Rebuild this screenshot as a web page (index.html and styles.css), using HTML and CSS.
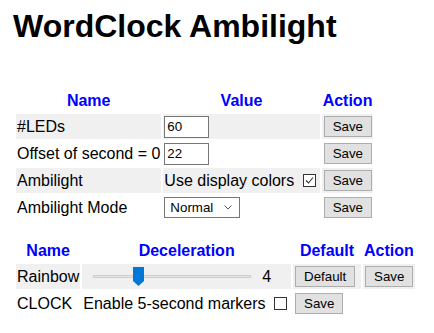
FILE: index.html
```html
<!DOCTYPE html>
<html>
<head>
<meta charset="utf-8">
<title>WordClock Ambilight</title>
<link rel="stylesheet" href="styles.css">
</head>
<body>
<h1 class="title">WordClock Ambilight</h1>

<table class="tbl tbl-config">
  <thead>
    <tr><th>Name</th><th>Value</th><th>Action</th></tr>
  </thead>
  <tbody>
    <tr class="alt">
      <td>#LEDs</td>
      <td><input class="num" type="text" value="60"></td>
      <td><button class="btn">Save</button></td>
    </tr>
    <tr>
      <td>Offset of second = 0</td>
      <td><input class="num" type="text" value="22"></td>
      <td><button class="btn">Save</button></td>
    </tr>
    <tr class="alt">
      <td>Ambilight</td>
      <td>Use display colors <span class="cb"><svg width="11" height="11" viewBox="0 0 11 11"><polyline points="2,5.5 4.5,8 9,2.5" fill="none" stroke="#333" stroke-width="1.1"/></svg></span></td>
      <td><button class="btn">Save</button></td>
    </tr>
    <tr>
      <td>Ambilight Mode</td>
      <td><span class="select-wrap"><select class="select"><option>Normal</option></select><svg class="chev" width="8" height="5" viewBox="0 0 8 5"><polyline points="0.5,0.5 4,4 7.5,0.5" fill="none" stroke="#555" stroke-width="1"/></svg></span></td>
      <td><button class="btn">Save</button></td>
    </tr>
  </tbody>
</table>

<table class="tbl tbl-effects">
  <thead>
    <tr><th>Name</th><th>Deceleration</th><th class="col-default">Default</th><th>Action</th></tr>
  </thead>
  <tbody>
    <tr class="alt">
      <td>Rainbow</td>
      <td>
        <div class="range">
          <span class="slider"><span class="track"></span><svg class="thumb" width="11" height="19" viewBox="0 0 11 19"><polygon points="0,0 11,0 11,14 5.5,19 0,14" fill="#0078d7"/></svg></span>
          <span class="val">4</span>
        </div>
      </td>
      <td><button class="btn">Default</button></td>
      <td><button class="btn">Save</button></td>
    </tr>
    <tr>
      <td>CLOCK</td>
      <td>Enable 5-second markers <span class="cb"></span></td>
      <td><button class="btn">Save</button></td>
      <td></td>
    </tr>
  </tbody>
</table>
</body>
</html>
```
FILE: styles.css
```css
body {
  margin: 8px 13px;
  font-family: "Liberation Sans", Arial, sans-serif;
  font-size: 16px;
  color: #000;
  background: #fff;
}

.title {
  font-size: 32px;
  font-weight: bold;
  line-height: normal;
  margin: 0 0 43px;
}

.tbl {
  border-spacing: 2px;
  margin-left: 1px;
}

.tbl-effects {
  margin-top: 16px;
}

.tbl th {
  color: #0000ff;
  font-weight: bold;
  text-align: center;
  padding: 1px;
}

.tbl thead tr {
  height: 22px;
}

.tbl tbody tr {
  height: 25px;
}

.tbl td {
  padding: 1px;
  white-space: nowrap;
  vertical-align: middle;
}

.tbl tr.alt td {
  background: #f0f0f0;
}

.col-default {
  width: 66px;
}

.btn {
  box-sizing: border-box;
  height: 21px;
  margin: 0 0 0 1px;
  padding: 0 8px;
  font-family: "Liberation Sans", Arial, sans-serif;
  font-size: 13.333px;
  color: #000;
  background: #e1e1e1;
  border: 1px solid #adadad;
  border-radius: 0;
  vertical-align: middle;
}

.num {
  box-sizing: border-box;
  width: 45px;
  height: 22px;
  margin: 0;
  padding: 0 2px;
  font-family: "Liberation Sans", Arial, sans-serif;
  font-size: 13.333px;
  color: #000;
  background: #fff;
  border: 1px solid #767676;
  border-radius: 0;
  vertical-align: middle;
}

.cb {
  display: inline-block;
  box-sizing: border-box;
  width: 13px;
  height: 13px;
  margin: 0 3px 0 4px;
  border: 1px solid #333;
  background: #fff;
  vertical-align: -1px;
}

.cb svg {
  display: block;
}

.select-wrap {
  position: relative;
  display: inline-block;
  vertical-align: middle;
}

.select {
  -webkit-appearance: none;
  appearance: none;
  box-sizing: border-box;
  width: 76px;
  height: 21px;
  margin: 0;
  padding: 0 0 0 5px;
  font-family: "Liberation Sans", Arial, sans-serif;
  font-size: 13.333px;
  color: #000;
  background: #fff;
  border: 1px solid #767676;
  border-radius: 0;
  display: block;
}

.chev {
  position: absolute;
  right: 8px;
  top: 8px;
}

.range {
  display: flex;
  align-items: center;
}

.slider {
  position: relative;
  display: block;
  width: 158px;
  height: 19px;
  margin-left: 10px;
}

.track {
  position: absolute;
  left: 0;
  right: 0;
  top: 8px;
  height: 3px;
  box-sizing: border-box;
  background: #e7e7e7;
  border: 1px solid #cdcdcd;
}

.thumb {
  position: absolute;
  left: 40px;
  top: 0;
}

.val {
  margin-left: 11px;
}
```
